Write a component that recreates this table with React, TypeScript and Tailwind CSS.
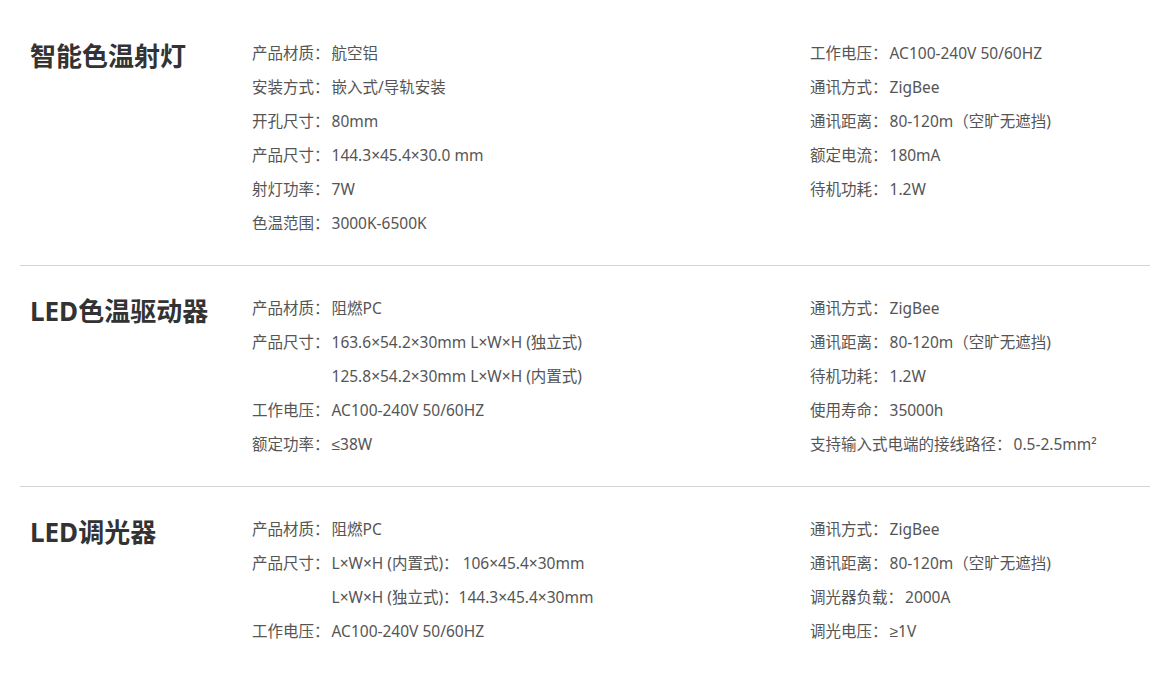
import React from 'react';

type Row = { label?: string; value: string };
type Spec = { title: string; left: Row[]; right: Row[] };

const specs: Spec[] = [
  {
    title: '智能色温射灯',
    left: [
      { label: '产品材质：', value: '航空铝' },
      { label: '安装方式：', value: '嵌入式/导轨安装' },
      { label: '开孔尺寸：', value: '80mm' },
      { label: '产品尺寸：', value: '144.3×45.4×30.0 mm' },
      { label: '射灯功率：', value: '7W' },
      { label: '色温范围：', value: '3000K-6500K' },
    ],
    right: [
      { label: '工作电压：', value: 'AC100-240V 50/60HZ' },
      { label: '通讯方式：', value: 'ZigBee' },
      { label: '通讯距离：', value: '80-120m（空旷无遮挡)' },
      { label: '额定电流：', value: '180mA' },
      { label: '待机功耗：', value: '1.2W' },
    ],
  },
  {
    title: 'LED色温驱动器',
    left: [
      { label: '产品材质：', value: '阻燃PC' },
      { label: '产品尺寸：', value: '163.6×54.2×30mm L×W×H (独立式)' },
      { value: '125.8×54.2×30mm L×W×H (内置式)' },
      { label: '工作电压：', value: 'AC100-240V 50/60HZ' },
      { label: '额定功率：', value: '≤38W' },
    ],
    right: [
      { label: '通讯方式：', value: 'ZigBee' },
      { label: '通讯距离：', value: '80-120m（空旷无遮挡)' },
      { label: '待机功耗：', value: '1.2W' },
      { label: '使用寿命：', value: '35000h' },
      { label: '支持输入式电端的接线路径：', value: '0.5-2.5mm²' },
    ],
  },
  {
    title: 'LED调光器',
    left: [
      { label: '产品材质：', value: '阻燃PC' },
      { label: '产品尺寸：', value: 'L×W×H (内置式)： 106×45.4×30mm' },
      { value: 'L×W×H (独立式)：144.3×45.4×30mm' },
      { label: '工作电压：', value: 'AC100-240V 50/60HZ' },
    ],
    right: [
      { label: '通讯方式：', value: 'ZigBee' },
      { label: '通讯距离：', value: '80-120m（空旷无遮挡)' },
      { label: '调光器负载：', value: '2000A' },
      { label: '调光电压：', value: '≥1V' },
    ],
  },
];

const SpecList = ({ rows }: { rows: Row[] }) => (
  <ul>
    {rows.map((row, i) => (
      <li key={i} className="h-[34px] leading-[34px] whitespace-nowrap">
        {/* continuation rows keep the label's width so values line up */}
        <span className={`mr-[2px] ${row.label ? '' : 'invisible'}`}>{row.label ?? '产品尺寸：'}</span>
        <span>{row.value}</span>
      </li>
    ))}
  </ul>
);

export default function App() {
  return (
    <div
      className="w-[1150px] min-h-[677px] bg-white pt-[11px] pl-[20px] text-[#555] text-[15.5px]"
      style={{ fontFamily: '"Noto Sans", "Liberation Sans", "Noto Sans CJK SC", sans-serif' }}
    >
      {specs.map((spec, i) => (
        <section
          key={spec.title}
          className={`flex py-[25px] pl-[10px] ${i < specs.length - 1 ? 'border-b border-[#d4d4d4]' : ''}`}
        >
          <h2 className="w-[222px] shrink-0 text-[26px] leading-[42px] font-bold text-[#333] -mt-[1px]">
            {spec.title}
          </h2>
          <div className="w-[558px] shrink-0">
            <SpecList rows={spec.left} />
          </div>
          <div className="flex-1">
            <SpecList rows={spec.right} />
          </div>
        </section>
      ))}
    </div>
  );
}
